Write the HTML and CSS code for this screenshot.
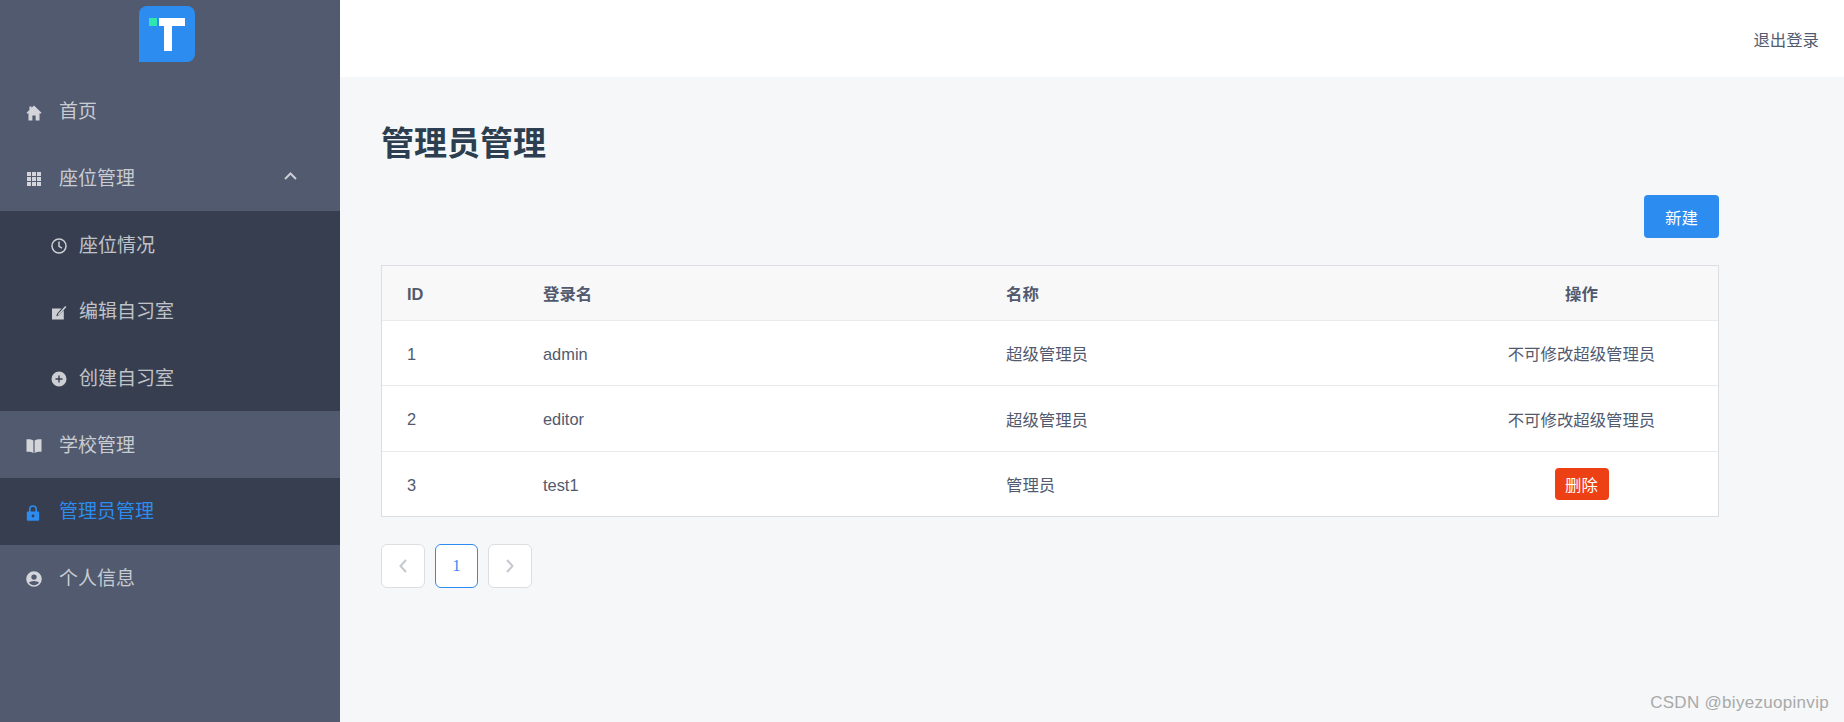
FILE: index.html
```html
<!DOCTYPE html>
<html lang="zh-CN">
<head>
    <meta charset="UTF-8">
    <meta name="viewport" content="width=device-width, initial-scale=1.0">
    <title>管理员管理</title>
    <link rel="stylesheet" href="styles.css">
</head>
<body>
    <div class="layout">
        <aside class="sider">
            <div class="logo-box">
                <svg class="logo" viewBox="0 0 56 56">
                    <path d="M8 0H48A8 8 0 0 1 56 8V48A8 8 0 0 1 48 56H0V8A8 8 0 0 1 8 0Z" fill="#2d8cf0"/>
                    <rect x="10" y="12" width="8" height="8" fill="#2fe6b1"/>
                    <path d="M20 12H46V20H33V45H25V20H20Z" fill="#fff"/>
                </svg>
            </div>
            <ul class="menu">
                <li class="menu-item">
                    <svg class="icon" viewBox="0 0 16 16"><path d="M8 .5 5.6 2.8V1.6H3.4V4.9L.5 7.8 1.2 8.5H2.5V15.5H6.4V10.6H9.6V15.5H13.5V8.5H14.8L15.5 7.8Z"/></svg>
                    <span>首页</span>
                </li>
                <li class="menu-item">
                    <svg class="icon" viewBox="0 0 16 16"><path d="M1 1h4v4H1zM6 1h4v4H6zM11 1h4v4h-4zM1 6h4v4H1zM6 6h4v4H6zM11 6h4v4h-4zM1 11h4v4H1zM6 11h4v4H6zM11 11h4v4h-4z"/></svg>
                    <span>座位管理</span>
                    <svg class="chevron" viewBox="0 0 13 8"><path d="M1 7 6.5 1.5 12 7"/></svg>
                </li>
                <li>
                    <ul class="submenu">
                        <li class="menu-item">
                            <svg class="icon" viewBox="0 0 16 16"><circle cx="8" cy="8" r="7" fill="none" stroke="currentColor" stroke-width="1.5"/><path d="M8 3.6V8.4L11 10.2" fill="none" stroke="currentColor" stroke-width="1.5"/></svg>
                            <span>座位情况</span>
                        </li>
                        <li class="menu-item">
                            <svg class="icon" viewBox="0 0 16 16"><path d="M1 3.5H10.5L6.2 8.4 5.2 11.2 8 10.2 12.8 5.2V14.5H1Z"/><path d="M7.4 8.6 14.2 1 15.4 2.1 8.6 9.6 6.8 10.4Z"/></svg>
                            <span>编辑自习室</span>
                        </li>
                        <li class="menu-item">
                            <svg class="icon" viewBox="0 0 16 16"><path fill-rule="evenodd" d="M8 .5a7.5 7.5 0 1 0 0 15 7.5 7.5 0 0 0 0-15ZM7.3 4.5h1.4v2.8h2.8v1.4H8.7v2.8H7.3V8.7H4.5V7.3h2.8Z"/></svg>
                            <span>创建自习室</span>
                        </li>
                    </ul>
                </li>
                <li class="menu-item">
                    <svg class="icon" viewBox="0 0 16 16"><path d="M7.4 2.6C6 1.4 3.4 1 .5 1.2V13.8C3.4 13.6 6 14 7.4 15.2ZM8.6 2.6C10 1.4 12.6 1 15.5 1.2V13.8C12.6 13.6 10 14 8.6 15.2Z"/></svg>
                    <span>学校管理</span>
                </li>
                <li class="menu-item active">
                    <svg class="icon" viewBox="0 0 16 16"><path fill-rule="evenodd" d="M7 .2A4 4 0 0 0 3 4.2V6.6H1.8A1 1 0 0 0 .8 7.6V14.8A1 1 0 0 0 1.8 15.8H12.2A1 1 0 0 0 13.2 14.8V7.6A1 1 0 0 0 12.2 6.6H11V4.2A4 4 0 0 0 7 .2ZM4.6 6.6V4.2A2.4 2.4 0 0 1 9.4 4.2V6.6ZM7 9.6A1.4 1.4 0 1 1 7 12.4 1.4 1.4 0 0 1 7 9.6Z"/></svg>
                    <span>管理员管理</span>
                </li>
                <li class="menu-item">
                    <svg class="icon" viewBox="0 0 16 16"><path fill-rule="evenodd" d="M8 .2a7.8 7.8 0 1 0 0 15.6A7.8 7.8 0 0 0 8 .2ZM8 3.4A2.7 2.7 0 1 1 8 8.8 2.7 2.7 0 0 1 8 3.4ZM8 14.2C6 14.2 4.2 13.3 3 11.8 3.6 10.6 6 9.9 8 9.9S12.4 10.6 13 11.8C11.8 13.3 10 14.2 8 14.2Z"/></svg>
                    <span>个人信息</span>
                </li>
            </ul>
        </aside>

        <div class="main">
            <header class="topbar">
                <a class="logout">退出登录</a>
            </header>
            <div class="content">
                <h1>管理员管理</h1>
                <div class="toolbar">
                    <button class="btn btn-primary">新建</button>
                </div>
                <div class="table-wrap">
                    <table>
                        <thead>
                            <tr>
                                <th class="col-id latin">ID</th>
                                <th class="col-login">登录名</th>
                                <th class="col-name">名称</th>
                                <th class="col-op">操作</th>
                            </tr>
                        </thead>
                        <tbody>
                            <tr>
                                <td class="latin">1</td>
                                <td class="latin">admin</td>
                                <td>超级管理员</td>
                                <td class="col-op">不可修改超级管理员</td>
                            </tr>
                            <tr>
                                <td class="latin">2</td>
                                <td class="latin">editor</td>
                                <td>超级管理员</td>
                                <td class="col-op">不可修改超级管理员</td>
                            </tr>
                            <tr>
                                <td class="latin">3</td>
                                <td class="latin">test1</td>
                                <td>管理员</td>
                                <td class="col-op"><button class="btn btn-danger">删除</button></td>
                            </tr>
                        </tbody>
                    </table>
                </div>
                <div class="pager">
                    <a class="page-btn">
                        <svg viewBox="0 0 8 14"><path d="M7 1 1.5 7 7 13"/></svg>
                    </a>
                    <a class="page-btn current">1</a>
                    <a class="page-btn">
                        <svg viewBox="0 0 8 14"><path d="M1 1 6.5 7 1 13"/></svg>
                    </a>
                </div>
            </div>
        </div>
    </div>
    <div class="watermark">CSDN @biyezuopinvip</div>
</body>
</html>
```

FILE: styles.css
```css
* {
    box-sizing: border-box;
}
html, body {
    height: 100%;
}
body {
    margin: 0;
    font-family: "Liberation Sans", "Noto Sans CJK SC", sans-serif;
    font-size: 16.4px;
    color: #515a6e;
    background-color: #f5f7f9;
    overflow: hidden;
}
ul {
    list-style: none;
    margin: 0;
    padding: 0;
}
.layout {
    display: flex;
    height: 722px;
}

/* sidebar */
.sider {
    flex: 0 0 340px;
    background-color: #515a6e;
}
.logo-box {
    display: flex;
    justify-content: center;
    height: 78px;
    padding: 6px 6px 0 0;
}
.logo {
    width: 56px;
    height: 56px;
}
.menu-item {
    display: flex;
    align-items: center;
    height: 66.67px;
    padding-left: 26px;
    font-size: 19px;
    color: rgba(255, 255, 255, 0.7);
}
.menu-item span {
    margin-bottom: 3px;
}
.icon {
    flex: 0 0 16px;
    width: 16px;
    height: 16px;
    margin-top: 3px;
    margin-right: 17px;
    fill: currentColor;
    color: rgba(255, 255, 255, 0.75);
}
.chevron {
    width: 13px;
    height: 8px;
    margin-left: auto;
    margin-right: 43px;
    margin-bottom: 3px;
    fill: none;
    stroke: rgba(255, 255, 255, 0.7);
    stroke-width: 2;
}
.submenu {
    background-color: #363e4f;
}
.submenu .menu-item {
    padding-left: 51px;
}
.submenu .icon {
    margin-right: 12px;
}
.menu-item.active {
    background-color: #363e4f;
    color: #2d8cf0;
}
.menu-item.active .icon {
    color: #2d8cf0;
}

/* main area */
.main {
    flex: 1;
    display: flex;
    flex-direction: column;
}
.topbar {
    display: flex;
    align-items: center;
    justify-content: flex-end;
    height: 77px;
    padding-right: 25px;
    background-color: #ffffff;
}
.content {
    padding: 41px 125px 0 41px;
}
h1 {
    margin: 0;
    height: 50px;
    font-size: 33px;
    line-height: 52px;
    font-weight: 700;
    color: #2c3e50;
}
.toolbar {
    display: flex;
    justify-content: flex-end;
    margin-top: 27px;
}
.btn {
    border: none;
    border-radius: 4px;
    font-family: inherit;
    font-size: 16.4px;
    color: #ffffff;
    padding: 0;
}
.btn-primary {
    width: 75px;
    height: 43px;
    background-color: #2d8cf0;
}
.btn-danger {
    display: block;
    width: 54px;
    height: 32px;
    margin: 0 auto;
    background-color: #ed4014;
}

/* table */
.table-wrap {
    margin-top: 27px;
    border: 1px solid #dcdee2;
    background-color: #ffffff;
}
table {
    width: 100%;
    border-collapse: separate;
    border-spacing: 0;
    table-layout: fixed;
}
th, td {
    padding: 0 0 0 25px;
    text-align: left;
    border-bottom: 1px solid #e8eaec;
}
th {
    height: 55px;
    background-color: #f8f8f9;
    font-weight: 700;
}
td {
    height: 65px;
}
tbody tr:nth-child(2) td {
    height: 66px;
}
tbody tr:last-child td {
    height: 64px;
    border-bottom: none;
}
/* latin-only cells sit a little high next to the cjk ones */
.latin {
    padding-top: 2px;
}
.col-id {
    width: 136px;
}
.col-login {
    width: 463px;
}
.col-name {
    width: 464px;
}
th.col-op, td.col-op {
    padding: 0;
    text-align: center;
}

/* pagination */
.pager {
    display: flex;
    gap: 10px;
    margin-top: 27px;
}
.page-btn {
    display: flex;
    align-items: center;
    justify-content: center;
    width: 44px;
    height: 44px;
    border: 1px solid #dcdee2;
    border-radius: 6px;
    background-color: #ffffff;
}
.page-btn svg {
    width: 8px;
    height: 14px;
    fill: none;
    stroke: #c5c8ce;
    stroke-width: 2;
}
.page-btn.current {
    width: 43px;
    border-color: #2d8cf0;
    color: #2d8cf0;
    font-family: "Liberation Serif", serif;
    font-size: 16px;
}

.watermark {
    position: absolute;
    right: 15px;
    bottom: 9px;
    font-size: 17px;
    letter-spacing: 0.3px;
    color: #a9a9a9;
}
```
